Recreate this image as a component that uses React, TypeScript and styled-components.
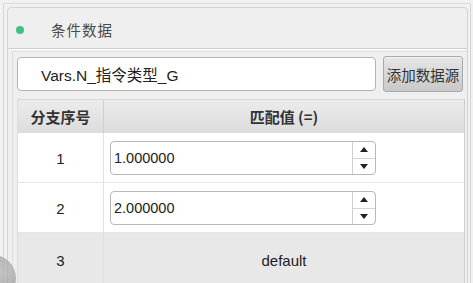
import React from "react";
import styled, { createGlobalStyle } from "styled-components";

const Global = createGlobalStyle`
  html, body { margin: 0; padding: 0; background: #f1f1f1; }
  body { font-family: "Liberation Sans", "Noto Sans CJK SC", Arial, sans-serif; }
`;

const Page = styled.div`
  position: relative;
  width: 473px;
  height: 283px;
  overflow: hidden;
  background: #f1f1f1;
`;

const Frame = styled.div`
  margin: 3px 2px 0 3px;
  border-top: 1px solid #dcdcdc;
  border-left: 1px solid #d6d6d6;
  border-right: 1px solid #d6d6d6;
  padding: 3px 2px 0 3px;
  height: 300px;
  box-sizing: border-box;
`;

const Panel = styled.div`
  border: 1px solid #d4d4d4;
  border-radius: 4px;
  background: #efefef;
  height: 320px;
`;

const Header = styled.div`
  height: 41px;
  display: flex;
  align-items: center;
  padding: 3px 0 0 8px;
  box-sizing: border-box;
  border-bottom: 1px solid #cfcfcf;
  box-shadow: 0 1px 0 #fafafa;
`;

const Dot = styled.span`
  width: 8px;
  height: 8px;
  border-radius: 50%;
  background: #3fc27f;
`;

const Title = styled.span`
  margin-left: 27px;
  font-family: "Noto Sans CJK SC", sans-serif;
  font-size: 14.5px;
  letter-spacing: 1px;
  color: #4a4a4a;
`;

const Body = styled.div`
  margin: 2px 0 0 4px;
  border-top: 1px solid #e2e2e2;
  border-left: 1px solid #dddddd;
  padding: 4px 3px 0 4px;
`;

const SourceRow = styled.div`
  display: flex;
  align-items: center;
  gap: 7px;
`;

const SourceInput = styled.div`
  width: 359px;
  height: 34px;
  box-sizing: border-box;
  border: 1px solid #b4b4b4;
  border-radius: 4px;
  background: #fff;
  display: flex;
  align-items: center;
  padding-left: 23px;
  font-family: "Liberation Sans", "Noto Sans CJK SC", sans-serif;
  font-size: 15.5px;
  color: #222;
`;

const AddButton = styled.div`
  width: 80px;
  height: 36px;
  box-sizing: border-box;
  border: 1px solid #a9a9a9;
  border-radius: 3px;
  background: linear-gradient(#e6e6e6, #c9c9c9);
  box-shadow: inset 0 1px 0 #f4f4f4;
  display: flex;
  align-items: center;
  justify-content: center;
  font-family: "Noto Sans CJK SC", sans-serif;
  font-size: 14.5px;
  color: #333;
  white-space: nowrap;
`;

const Table = styled.div`
  margin-top: 7px;
  width: 446px;
  border-left: 1px solid #dcdcdc;
  border-right: 1px solid #cfcfcf;
  display: grid;
  grid-template-columns: 85px 1fr;
`;

const HeadCell = styled.div`
  height: 34px;
  display: flex;
  align-items: center;
  justify-content: center;
  background: linear-gradient(#ececec, #dcdcdc);
  border-top: 1px solid #d8d8d8;
  box-sizing: border-box;
  font-family: "Noto Sans CJK SC", sans-serif;
  font-weight: bold;
  font-size: 15px;
  color: #333;
  & + & { border-left: 1px solid #d0d0d0; }
`;

const Cell = styled.div<{ $grey?: boolean; $first?: boolean; $left?: boolean }>`
  height: ${(p) => (p.$grey ? "56px" : "50px")};
  box-sizing: border-box;
  display: flex;
  align-items: ${(p) => (p.$grey ? "flex-start" : "center")};
  padding-top: ${(p) => (p.$grey ? "19px" : "1px")};
  justify-content: ${(p) => (p.$left ? "flex-start" : "center")};
  padding-left: ${(p) => (p.$left ? "6px" : "0")};
  background: ${(p) => (p.$grey ? "#e8e8e8" : "#ffffff")};
  border-bottom: 1px solid #e6e6e6;
  border-left: ${(p) => (p.$first ? "none" : "1px solid #e0e0e0")};
  font-family: "Liberation Sans", sans-serif;
  font-size: 15px;
  color: #222;
`;

const Spin = styled.div`
  width: 266px;
  height: 34px;
  box-sizing: border-box;
  border: 1px solid #b8b8b8;
  border-radius: 4px;
  background: #fff;
  display: flex;
`;

const SpinText = styled.div`
  flex: 1;
  display: flex;
  align-items: center;
  padding-left: 3px;
  font-family: "Liberation Sans", sans-serif;
  font-size: 14.5px;
  color: #222;
`;

const SpinButtons = styled.div`
  width: 22px;
  border-left: 1px solid #cfcfcf;
  display: flex;
  flex-direction: column;
`;

const SpinBtn = styled.div`
  flex: 1;
  display: flex;
  align-items: center;
  justify-content: center;
  & + & { border-top: 1px solid #d6d6d6; }
`;

const Corner = styled.div`
  position: absolute;
  left: -30px;
  top: 255px;
  width: 46px;
  height: 46px;
  border-radius: 50%;
  background: radial-gradient(circle at 70% 35%, #b0b0b0, #7c7c7c);
  opacity: 0.7;
`;

const Up = () => (
  <svg width="8" height="5" viewBox="0 0 8 5"><path d="M0 5 L4 0 L8 5 Z" fill="#222" /></svg>
);
const Down = () => (
  <svg width="8" height="5" viewBox="0 0 8 5"><path d="M0 0 L4 5 L8 0 Z" fill="#222" /></svg>
);

const NumberInput = ({ value }: { value: string }) => (
  <Spin>
    <SpinText>{value}</SpinText>
    <SpinButtons>
      <SpinBtn><Up /></SpinBtn>
      <SpinBtn><Down /></SpinBtn>
    </SpinButtons>
  </Spin>
);

export default function App() {
  return (
    <>
      <Global />
      <Page>
        <Frame>
          <Panel>
            <Header>
              <Dot />
              <Title>条件数据</Title>
            </Header>
            <Body>
              <SourceRow>
                <SourceInput>Vars.N_指令类型_G</SourceInput>
                <AddButton>添加数据源</AddButton>
              </SourceRow>
              <Table>
                <HeadCell>分支序号</HeadCell>
                <HeadCell>匹配值 (=)</HeadCell>
                <Cell $first>1</Cell>
                <Cell $left><NumberInput value="1.000000" /></Cell>
                <Cell $first>2</Cell>
                <Cell $left><NumberInput value="2.000000" /></Cell>
                <Cell $first $grey>3</Cell>
                <Cell $grey>default</Cell>
              </Table>
            </Body>
          </Panel>
        </Frame>
        <Corner />
      </Page>
    </>
  );
}
